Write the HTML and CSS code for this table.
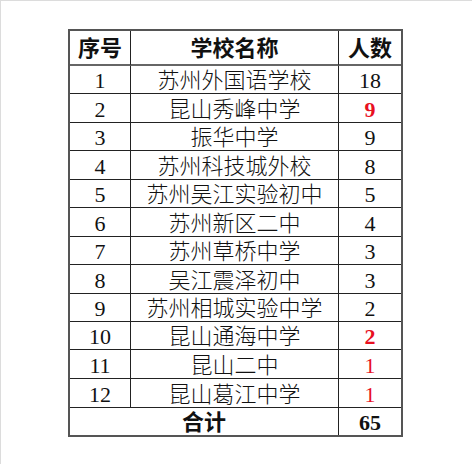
FILE: index.html
```html
<!DOCTYPE html>
<html lang="zh-CN">
<head>
<meta charset="utf-8">
<title>学校人数</title>
<link rel="stylesheet" href="styles.css">
</head>
<body>
<div class="page">
  <table class="sheet">
    <tr class="head">
      <td class="c1">序号</td><td class="c2">学校名称</td><td class="c3">人数</td>
    </tr>
    <tr class="r28"><td class="c1 num">1</td><td class="c2">苏州外国语学校</td><td class="c3 num">18</td></tr>
    <tr class="r29"><td class="c1 num">2</td><td class="c2">昆山秀峰中学</td><td class="c3 num red bold">9</td></tr>
    <tr class="r28"><td class="c1 num">3</td><td class="c2">振华中学</td><td class="c3 num">9</td></tr>
    <tr class="r29"><td class="c1 num">4</td><td class="c2">苏州科技城外校</td><td class="c3 num">8</td></tr>
    <tr class="r28"><td class="c1 num">5</td><td class="c2">苏州吴江实验初中</td><td class="c3 num">5</td></tr>
    <tr class="r29"><td class="c1 num">6</td><td class="c2">苏州新区二中</td><td class="c3 num">4</td></tr>
    <tr class="r28"><td class="c1 num">7</td><td class="c2">苏州草桥中学</td><td class="c3 num">3</td></tr>
    <tr class="r29"><td class="c1 num">8</td><td class="c2">吴江震泽初中</td><td class="c3 num">3</td></tr>
    <tr class="r28"><td class="c1 num">9</td><td class="c2">苏州相城实验中学</td><td class="c3 num">2</td></tr>
    <tr class="r28"><td class="c1 num">10</td><td class="c2">昆山通海中学</td><td class="c3 num red bold">2</td></tr>
    <tr class="r29"><td class="c1 num">11</td><td class="c2">昆山二中</td><td class="c3 num red">1</td></tr>
    <tr class="r29"><td class="c1 num">12</td><td class="c2">昆山葛江中学</td><td class="c3 num red">1</td></tr>
    <tr class="total"><td class="c12" colspan="2">合计</td><td class="c3 num bold">65</td></tr>
  </table>
</div>
</body>
</html>
```
FILE: styles.css
```css
html, body {
  margin: 0;
  padding: 0;
  background: #fff;
}
.page {
  box-sizing: border-box;
  width: 472px;
  height: 464px;
  border-top: 1px solid #dcdcdc;
  border-left: 1px solid #dcdcdc;
  padding: 28px 0 0 67px;
}
.sheet {
  border-collapse: separate;
  border-spacing: 0;
  border: 2px solid #555;
  font-family: "Liberation Serif", "Noto Sans CJK SC", serif;
  font-size: 22px;
  font-weight: 300;
  color: #111;
  table-layout: fixed;
}
.sheet td {
  box-sizing: border-box;
  padding: 3px 0 0 0;
  text-align: center;
  vertical-align: middle;
  line-height: 1;
  border-right: 1px solid #222;
  border-bottom: 1px solid #222;
  white-space: nowrap;
}
.sheet td.c3 { border-right: none; }
.sheet tr.total td { border-bottom: none; }
.c1 { width: 61px; }
.c2 { width: 208px; }
.c3 { width: 62px; }
.head td {
  height: 35px;
  font-weight: bold;
  border-bottom: 2px solid #666;
}
.r28 td { height: 28px; }
.r29 td { height: 29px; }
.total td { height: 27px; font-weight: bold; }
.num {
  font-family: "Liberation Serif", serif;
  font-weight: normal;
}
.red { color: #e8101f; }
.bold { font-weight: bold; }
```
